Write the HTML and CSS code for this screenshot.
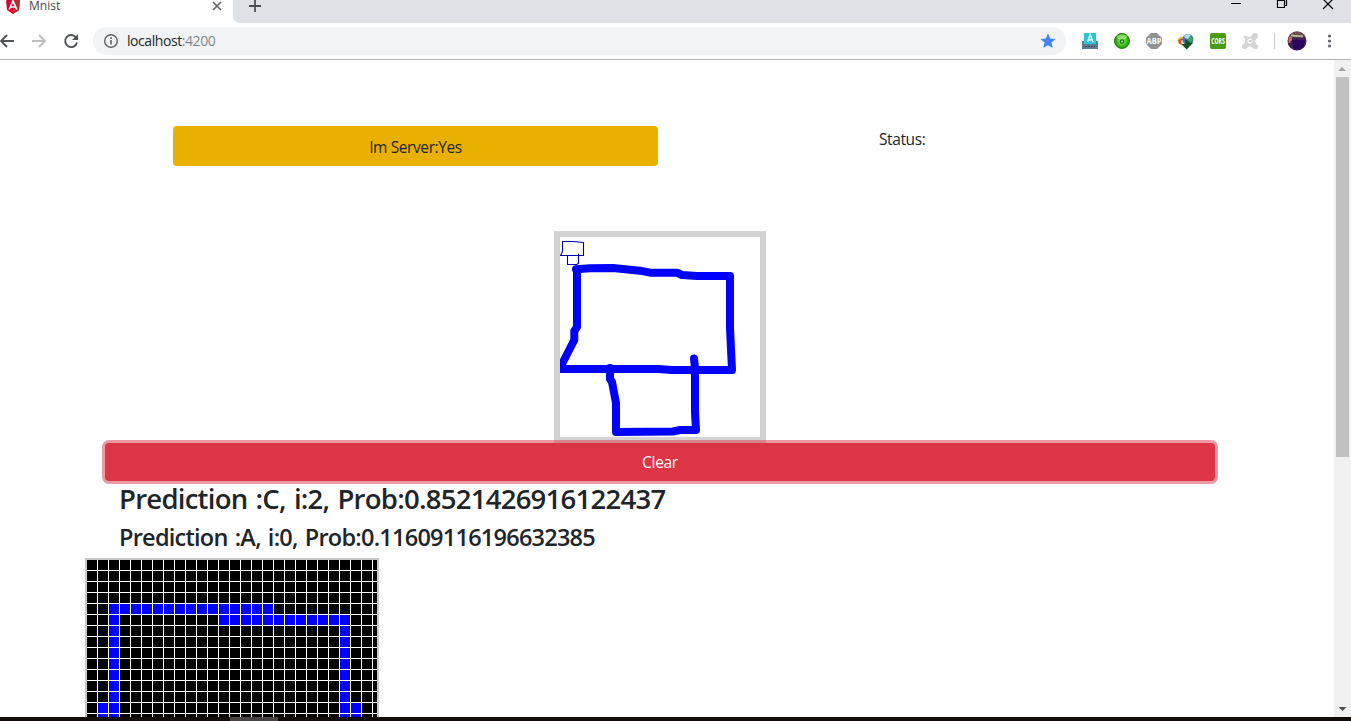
FILE: index.html
```html
<!DOCTYPE html>
<html lang="en">
<head>
<meta charset="utf-8">
<title>Mnist</title>
<link rel="stylesheet" href="styles.css">
</head>
<body>
<header class="tabs">
  <div class="tab">
    <svg class="logo" width="16" height="16" viewBox="0 0 16 16"><path fill="#dd0031" d="M8 0l7 2.500-1 9.500-6 4-6-4-1-9.500z"/><path fill="#b52e31" d="M8 0l7 2.500-1 9.500-6 4z"/><path fill="none" stroke="#fff" stroke-width="1.700" d="M4.200 11.500L8 3l3.800 8.500M5.800 9h4.400"/></svg>
    <span class="tab-title">Mnist</span>
    <svg class="tab-close" width="10" height="10" viewBox="0 0 10 10"><path stroke="#5f6368" stroke-width="1.600" d="M1 1l8 8M9 1l-8 8"/></svg>
  </div>
  <div class="strip">
    <svg class="plus" width="12" height="12" viewBox="0 0 12 12"><path stroke="#4a4d51" stroke-width="1.800" d="M6 0v12M0 6h12"/></svg>
    <svg class="winbtns" width="104" height="14" viewBox="0 0 104 14" fill="none" stroke="#000" stroke-width="1.200"><path d="M0 3.500h10M46.500 0.500h7v7h-7zM48.500 0v-1.500h7v7h-2M92 -1l10 10M102 -1l-10 10"/></svg>
  </div>
</header>
<nav class="toolbar">
  <svg class="navicons" width="80" height="20" viewBox="0 0 80 20" fill="none" stroke-width="1.900"><path stroke="#505357" d="M14 10H1M7 4l-6 6 6 6"/><path stroke="#bcbec0" d="M32 10h13M39 4l6 6-6 6"/><path stroke="#505357" d="M76 6.500A6 6 0 1 0 77 11.500"/><path fill="#505357" d="M78 3v6h-6z"/></svg>
  <div class="address">
    <svg width="16" height="16" viewBox="0 0 16 16"><circle cx="8" cy="8" r="6.300" fill="none" stroke="#5f6368" stroke-width="1.400"/><path stroke="#5f6368" stroke-width="1.600" d="M8 7v4.500M8 4.300v1.600"/></svg>
    <span class="url">localhost<span class="port">:4200</span></span>
    <svg class="star" width="16" height="16" viewBox="0 0 16 16"><path fill="#4285f4" d="M8 .5l2.200 5 5.300.5-4 3.600 1.200 5.400L8 12.200 3.300 15l1.200-5.400-4-3.600 5.300-.5z"/></svg>
  </div>
  <svg class="extensions" width="270" height="24" viewBox="1081 29 270 24">
    <defs>
      <radialGradient id="g"><stop offset="0" stop-color="#98ee60"/><stop offset=".4" stop-color="#6bd53e"/><stop offset=".7" stop-color="#38b31c"/><stop offset="1" stop-color="#1e940d"/></radialGradient>
    </defs>
    <path fill="#607d8b" d="M1082 41h2v3h12v-3h2v8h-16z"/><rect x="1084" y="33" width="12" height="11" fill="#2ac6dc"/><path stroke="#e6fbff" stroke-width="1.500" fill="none" d="M1087.500 42l2.700-7.500 2.700 7.500M1088.500 40h3.400"/><path stroke="#344c58" stroke-dasharray="2 1" d="M1085 46.500h10"/>
    <circle cx="1122" cy="41" r="7.500" fill="url(#g)" stroke="#21800f"/><ellipse cx="1122" cy="37" rx="5" ry="2.500" fill="#b8f09a" opacity=".6"/><circle cx="1122" cy="41.500" r="2.300" fill="#176f0c"/><circle cx="1122" cy="41.500" r="1.100" fill="#a8e888"/>
    <path fill="#929292" d="M1151 33h6l5 5v6l-5 5h-6l-5-5v-6z"/><text x="1154" y="44.200" text-anchor="middle" class="abp" textLength="15" lengthAdjust="spacingAndGlyphs">ABP</text>
    <ellipse cx="1184" cy="41.500" rx="6.500" ry="4.500" fill="#e0b93a" transform="rotate(15 1184 41)"/><ellipse cx="1182" cy="41.500" rx="3.600" ry="2.800" fill="#cc5340"/><ellipse cx="1183.500" cy="42" rx="2.600" ry="2" fill="#e7ecdb"/><circle cx="1188" cy="39.500" r="5.500" fill="#3876bd"/><path fill="#b7ddec" d="M1184 36l4-2 3 1-3 4-3-1z"/><path fill="#4aa83a" d="M1190 36l3 3-2 4-3-3z"/><path fill="#174f20" d="M1185 39l6 4h2l-6.500 6.500-5-5.500h4z"/>
    <rect x="1210" y="33" width="16" height="16" rx="2" fill="#4a9d13"/><text x="1218" y="44.300" text-anchor="middle" class="cors" textLength="13.500" lengthAdjust="spacingAndGlyphs">CORS</text>
    <g fill="#d4d5d6"><path d="M1245 36l5 1 5-4 3 3-3 5 2 5-3 3-4-3-5 3-3-1 3-6z"/><circle cx="1245" cy="37" r="1.500"/><circle cx="1255" cy="36" r="3"/><circle cx="1244.500" cy="46.500" r="2.500"/><circle cx="1255.500" cy="46.500" r="2.500"/></g><circle cx="1250" cy="41" r="2.600" fill="#fff"/><circle cx="1250.500" cy="41" r="1.200" fill="#c5c5c5"/>
    <path stroke="#c8cacc" d="M1274.500 33v16"/>
    <circle cx="1297" cy="41" r="9.500" fill="#402052"/><path fill="#704e50" d="M1289 37q3-6 8-5.500 6 0 8 5l-2 1h-13z"/><path fill="#b0b69a" d="M1291 34.500l12 1v1.800l-12-.8z"/><path stroke="#d85c65" stroke-width="2" d="M1289.500 37v6"/><path stroke="#c5d888" d="M1291 37v4"/><path fill="#2b075c" d="M1292 40h13l-1.500 7-5.500 3-5-2z"/>
    <g fill="#5f6368"><circle cx="1329.500" cy="36" r="1.600"/><circle cx="1329.500" cy="41" r="1.600"/><circle cx="1329.500" cy="46" r="1.600"/></g>
  </svg>
</nav>
<main class="viewport">
  <div class="page">
    <div class="row">
      <div class="server">Im Server:Yes</div>
      <div class="status">Status:</div>
    </div>
    <svg class="pad" width="200" height="200" viewBox="0 0 200 200" fill="none" stroke="#00f" stroke-linecap="round" stroke-linejoin="round">
      <path stroke-width="1.100" stroke="#0000b4" d="M2.500 4.500H13.500L23.500 5.500V18.500H.5l2-4zM7.500 18.500v9h9l2-1V17"/>
      <path stroke-width="8" d="M16 32.300L30 31.300 53 31 80 33.700 90 35.700H117L122 38 137 39H170V91L172 133H112L98 132H0L2 127 14.300 103V94L17 90V33"/>
      <path stroke-width="8" d="M50 131V142L52 145 56 166V195L113 194.500 120 193H136L135 175V131L134 121.500"/>
    </svg>
    <button class="clear">Clear</button>
    <h3 class="first">Prediction :C, i:2, Prob:0.8521426916122437</h3>
    <h4 class="second">Prediction :A, i:0, Prob:0.11609116196632385</h4>
    <svg class="grid" width="290" height="157" viewBox="0 0 290 157" shape-rendering="crispEdges">
      <defs><pattern id="lines" width="11" height="11" patternUnits="userSpaceOnUse"><path fill="#fff" d="M10 0h1v11H0v-1h10z"/></pattern></defs>
      <rect width="290" height="157" fill="#000"/>
      <path fill="#00f" d="M22 44h164v10H22zM132 55h131v10H132zM22 54h10v103H22zM253 65h10v92h-10zM11 143h11v14H11zM263 143h11v14h-11z"/>
      <rect width="290" height="157" fill="url(#lines)"/>
    </svg>
  </div>
  <aside class="scrollbar">
    <svg width="17" height="17" viewBox="0 0 17 17"><path fill="#a3a3a3" d="M4 11l4-4 4 4z"/></svg>
    <div class="thumb"></div>
    <svg class="down" width="17" height="17" viewBox="0 0 17 17"><path fill="#505050" d="M4.500 7h8l-4 4z"/></svg>
  </aside>
</main>
<footer class="taskbar"><div class="active"></div></footer>
</body>
</html>
```
FILE: styles.css
```css
* { box-sizing: border-box; }
body { margin: 0; width: 1351px; height: 721px; overflow: hidden; display: flex; flex-direction: column; background: #fff; color: #212529; font-family: "Open Sans", "Noto Sans", sans-serif; }
svg { display: block; flex: none; }
.tabs { display: flex; height: 23px; background: #fff; }
.tab { width: 233px; display: flex; align-items: flex-start; padding-left: 5px; }
.logo { margin-top: -2px; }
.tab-title { margin-left: 8px; font-size: 12px; line-height: 12px; color: #45484c; }
.tab-close { margin: 1px 11px 0 auto; }
.strip { flex: 1; display: flex; background: #dee1e6; border-bottom-left-radius: 7px; padding-left: 16px; }
.winbtns { margin-left: auto; margin-right: 16px; }
.toolbar { height: 37px; display: flex; align-items: center; border-bottom: 1px solid #b2b4b6; }
.navicons { margin-right: 13px; }
.address { width: 973px; height: 28px; border-radius: 14px; background: #f1f3f4; display: flex; align-items: center; padding: 0 10px; }
.url { margin: -1px 0 0 8px; font-size: 14px; letter-spacing: -0.43px; color: #24272a; }
.port { color: #80868b; }
.star { margin-left: auto; }
.extensions { margin-left: 15px; }
.abp { font: bold 9px "Open Sans", sans-serif; fill: #fff; }
.cors { font: bold 8.5px "Open Sans", sans-serif; fill: #fff; }
.viewport { height: 657px; display: flex; }
.page { width: 1334px; overflow: hidden; display: flex; flex-direction: column; }
.row { display: flex; margin-top: 66px; margin-left: 173px; }
.server { width: 485px; height: 40px; border-radius: 4px; background: #eab000; display: flex; align-items: center; justify-content: center; padding-top: 1px; font-size: 15.5px; letter-spacing: -0.4px; }
.status { margin-left: 221px; font-size: 15.5px; letter-spacing: -0.4px; line-height: 26px; }
.pad { box-sizing: content-box; margin: 65px 0 0 554px; border: 6px solid #d3d3d3; }
.clear { margin: 0 0 0 105px; padding: 0; flex: none; width: 1110px; height: 38px; border: 0; border-radius: 4px; background: #dc3545; color: #fff; font: 15.5px "Open Sans", sans-serif; letter-spacing: -0.3px; box-shadow: 0 0 0 3px rgba(220,53,69,.5); position: relative; }
.first, .second { margin: 0 0 0 119px; font-weight: 600; white-space: nowrap; }
.first { font-size: 27.5px; letter-spacing: -0.74px; word-spacing: 1.7px; line-height: 35px; height: 38px; }
.second { font-size: 23.5px; letter-spacing: -0.75px; word-spacing: 1.7px; line-height: 36px; height: 39px; }
.grid { box-sizing: content-box; margin-left: 85px; border: 2px solid #c8c8c8; border-bottom: 0; }
.scrollbar { width: 17px; background: #f1f1f1; display: flex; flex-direction: column; }
.thumb { width: 13px; height: 380px; margin-left: 2px; background: #c1c1c1; }
.down { margin-top: auto; }
.taskbar { height: 4px; background: #120b0a; padding-left: 230px; }
.active { width: 48px; height: 4px; background: #4b4444; }
```
